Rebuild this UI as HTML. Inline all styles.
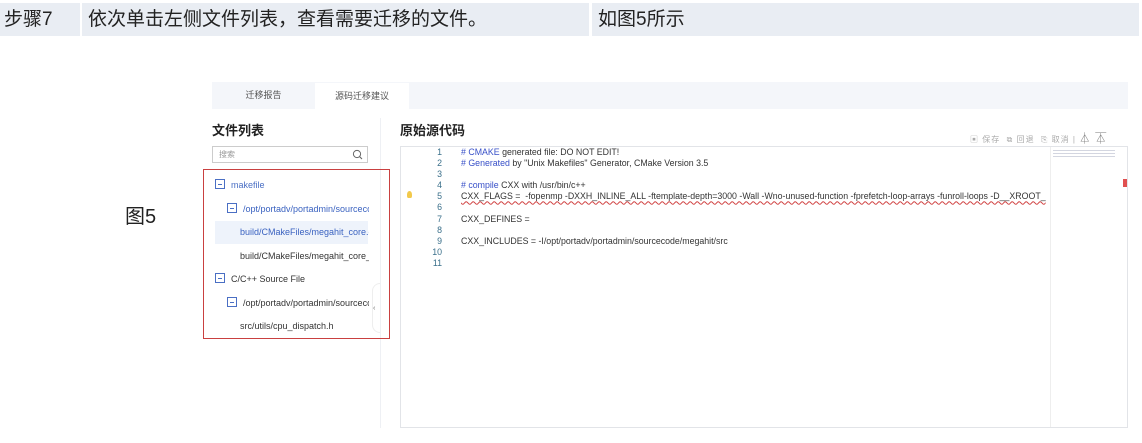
<!DOCTYPE html>
<html><head><meta charset="utf-8"><style>
*{margin:0;padding:0;box-sizing:border-box}
body{width:1142px;height:443px;background:#fff;position:relative;overflow:hidden;font-family:"Liberation Sans","Noto Sans CJK SC",sans-serif;color:#333}
.a{position:absolute}
.hd{top:3px;height:33px;background:#e9edf3;font-size:19px;color:#222;line-height:33px;padding-left:4px}
.tabs{left:212px;top:82px;width:916px;height:27px;background:#f4f6fa}
.tab{height:27px;font-size:9px;color:#555;line-height:27px;text-align:center}
.t1{font-size:13px;font-weight:bold;color:#222}
.tree{font-size:9px;line-height:23.5px;white-space:nowrap;overflow:hidden}
.bx{display:inline-block;width:10px;height:10px;border:1px solid #4a6fc4;vertical-align:-1px;margin-right:6px;position:relative}
.bx:after{content:"";position:absolute;left:2px;right:2px;top:4px;height:1px;background:#4a6fc4}
.code{font-size:8.8px;line-height:11.1px;color:#333;white-space:nowrap}
.ln{color:#3a6f8a;text-align:right;width:442px}
.b{color:#3850c8}
</style></head><body>
<div class="a hd" style="left:0;width:80px">步骤7</div>
<div class="a hd" style="left:82px;width:507px;padding-left:6px">依次单击左侧文件列表，查看需要迁移的文件。</div>
<div class="a hd" style="left:592px;width:547px;padding-left:6px">如图5所示</div>

<div class="a tabs"></div>
<div class="a tab" style="left:212px;top:82px;width:103px">迁移报告</div>
<div class="a tab" style="left:315px;width:94px;background:#fff;top:83px">源码迁移建议</div>

<div class="a t1" style="left:212px;top:120px">文件列表</div>
<div class="a t1" style="left:400px;top:120px">原始源代码</div>
<div class="a" style="left:380px;top:118px;width:1px;height:310px;background:#eef0f4"></div>

<div class="a" style="left:212px;top:146px;width:156px;height:17px;border:1px solid #ccc;font-size:8px;color:#999;line-height:15px;padding-left:6px">搜索
<svg class="a" style="right:4px;top:2px" width="11" height="11"><circle cx="5" cy="5" r="3.6" fill="none" stroke="#666" stroke-width="1"/><path d="M7.6 7.6L10 10" stroke="#666" stroke-width="1.1"/></svg></div>

<div class="a" style="left:203px;top:169px;width:187px;height:170px;border:1.5px solid #c94040"></div>
<div class="a" style="left:215px;top:221px;width:153px;height:23px;background:#eef3fb"></div>
<div class="a tree" style="left:215px;top:174px;width:154px">
<div style="color:#4a6fc4"><span class="bx"></span>makefile</div>
<div style="color:#3a62c0;padding-left:12px"><span class="bx"></span>/opt/portadv/portadmin/sourcecode</div>
<div style="color:#3a62c0;padding-left:25px">build/CMakeFiles/megahit_core.dir</div>
<div style="padding-left:25px">build/CMakeFiles/megahit_core_</div>
<div><span class="bx"></span>C/C++ Source File</div>
<div style="padding-left:12px"><span class="bx"></span>/opt/portadv/portadmin/sourcecode</div>
<div style="padding-left:25px">src/utils/cpu_dispatch.h</div>
</div>
<div class="a" style="left:372px;top:283px;width:8px;height:50px;border:1px solid #eee;border-right:none;border-radius:8px 0 0 8px;font-size:7px;line-height:50px;color:#666">‹</div>

<div class="a" style="left:970px;top:130px;font-size:8px;color:#aaa;letter-spacing:1px">▣ 保存 &nbsp;⧉ 回退 &nbsp;⎘ 取消 | <span style="font-size:11px;color:#777">⏃ ⏄</span></div>
<div class="a" style="left:400px;top:146px;width:728px;height:282px;border:1px solid #e2e4e8"></div>
<div class="a" style="left:1050px;top:147px;width:1px;height:280px;background:#eee"></div>
<div class="a" style="left:1053px;top:148px;width:62px;height:10px;background:repeating-linear-gradient(#fff 0 2px,#c8cbd8 2px 3px);opacity:.8"></div>
<div class="a" style="left:1123px;top:179px;width:4px;height:8px;background:#e05050"></div>
<div class="a" style="left:407px;top:191px;width:5px;height:7px;background:#f2c94c;border-radius:50% 50% 30% 30%"></div>

<div class="a code" style="left:0;top:147px">
<div class="ln">1</div><div class="ln">2</div><div class="ln">3</div><div class="ln">4</div><div class="ln">5</div><div class="ln">6</div><div class="ln">7</div><div class="ln">8</div><div class="ln">9</div><div class="ln">10</div><div class="ln">11</div>
</div>
<div class="a code" style="left:461px;top:147px">
<div><span class="b"># CMAKE</span> generated file: DO NOT EDIT!</div>
<div><span class="b"># Generated</span> by "Unix Makefiles" Generator, CMake Version 3.5</div>
<div>&nbsp;</div>
<div><span class="b"># compile</span> CXX with /usr/bin/c++</div>
<div style="text-decoration:underline wavy #d04040;text-decoration-thickness:1px">CXX_FLAGS = &nbsp;-fopenmp -DXXH_INLINE_ALL -ftemplate-depth=3000 -Wall -Wno-unused-function -fprefetch-loop-arrays -funroll-loops -D__XROOT_</div>
<div>&nbsp;</div>
<div>CXX_DEFINES =</div>
<div>&nbsp;</div>
<div>CXX_INCLUDES = -I/opt/portadv/portadmin/sourcecode/megahit/src</div>
</div>

<div class="a" style="left:125px;top:200px;font-size:20px;color:#222">图5</div>
</body></html>
